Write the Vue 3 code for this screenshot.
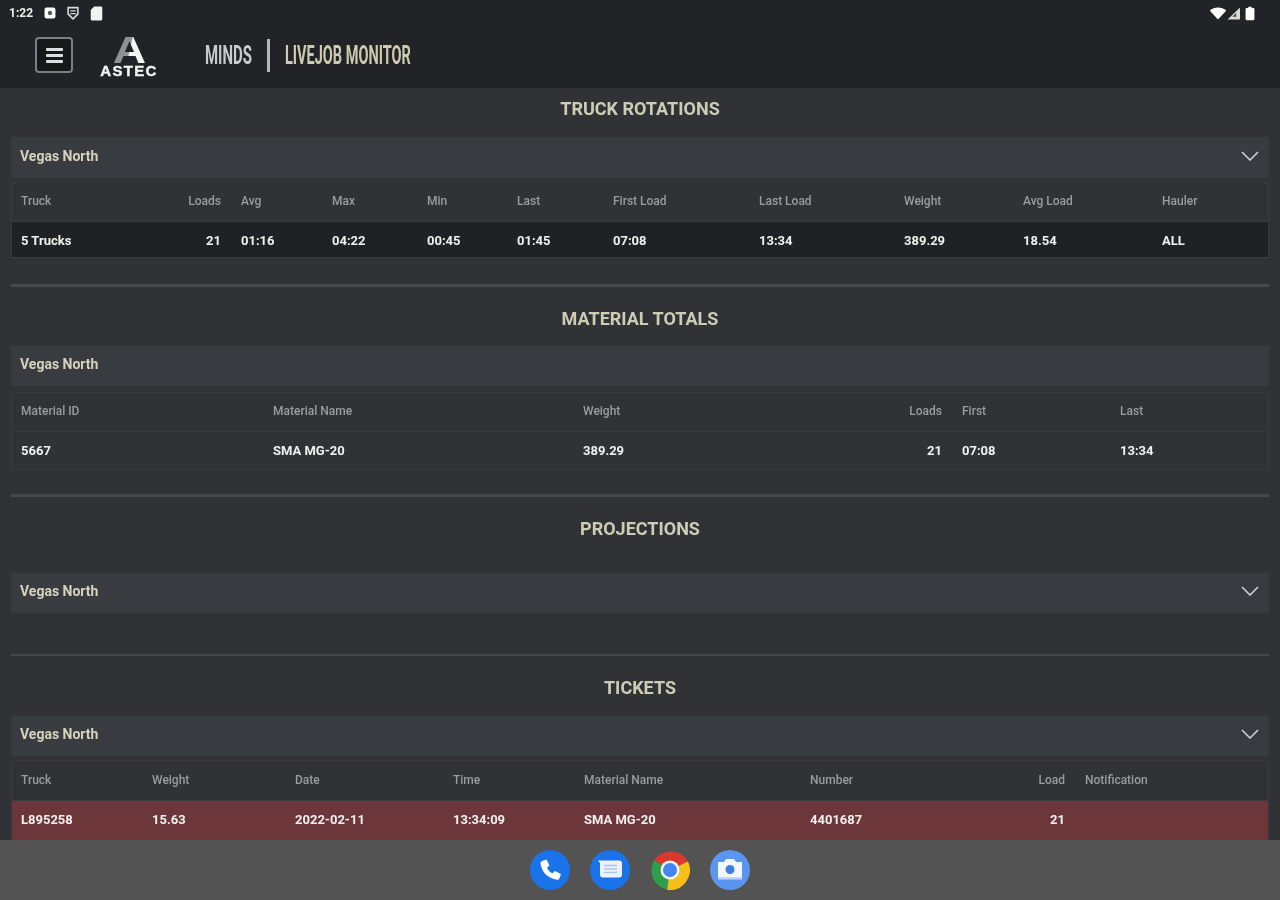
<script setup>
const truckCols = [
  { label: 'Truck', value: '5 Trucks', w: 160 },
  { label: 'Loads', value: '21', w: 60, end: true },
  { label: 'Avg', value: '01:16', w: 91 },
  { label: 'Max', value: '04:22', w: 95 },
  { label: 'Min', value: '00:45', w: 90 },
  { label: 'Last', value: '01:45', w: 96 },
  { label: 'First Load', value: '07:08', w: 146 },
  { label: 'Last Load', value: '13:34', w: 145 },
  { label: 'Weight', value: '389.29', w: 119 },
  { label: 'Avg Load', value: '18.54', w: 139 },
  { label: 'Hauler', value: 'ALL', w: 117 },
]
const materialCols = [
  { label: 'Material ID', value: '5667', w: 252 },
  { label: 'Material Name', value: 'SMA MG-20', w: 310 },
  { label: 'Weight', value: '389.29', w: 307 },
  { label: 'Loads', value: '21', w: 72, end: true },
  { label: 'First', value: '07:08', w: 158 },
  { label: 'Last', value: '13:34', w: 159 },
]
const ticketCols = [
  { label: 'Truck', value: 'L895258', w: 131 },
  { label: 'Weight', value: '15.63', w: 143 },
  { label: 'Date', value: '2022-02-11', w: 158 },
  { label: 'Time', value: '13:34:09', w: 131 },
  { label: 'Material Name', value: 'SMA MG-20', w: 226 },
  { label: 'Number', value: '4401687', w: 200 },
  { label: 'Load', value: '21', w: 75, end: true },
  { label: 'Notification', value: '', w: 195 },
]
const tmpl = (cols) => ({ gridTemplateColumns: cols.map((c) => c.w + 'px').join(' ') })
</script>

<template>
  <div class="page">
    <header class="top">
      <div class="status">
        <div class="status-left">
          <span class="time">1:22</span>
          <svg width="12" height="12" viewBox="0 0 11 11"><rect x="0.5" y="0.5" width="10" height="10" rx="2" fill="#fff"/><circle cx="5.500" cy="5.500" r="2" fill="#55585c"/></svg>
          <svg width="12" height="14" viewBox="0 0 11 13"><path d="M1 1.500h9v6L5.500 12 1 7.500z" fill="none" stroke="#d8d8d8" stroke-width="1.500"/><path d="M3 4.500h5M3 7h5" stroke="#d8d8d8" stroke-width="1.200"/></svg>
          <svg width="13" height="15" viewBox="0 0 11 13"><path d="M3.500 0.500H9.500a1 1 0 0 1 1 1v10a1 1 0 0 1-1 1h-8a1 1 0 0 1-1-1V3.500z" fill="#f2f2f2"/></svg>
        </div>
        <div class="status-right">
          <svg width="18" height="13" viewBox="0 0 16 12"><path d="M0.500 3.500C4.500-0.500 11.500-0.500 15.500 3.500L8 11.500z" fill="#fff"/></svg>
          <svg width="13" height="13" viewBox="0 0 12 12"><path d="M12 0.500V11.500H0.500z" fill="#d8d8d8"/><path d="M8.500 5.500V9H5z" fill="#45474a"/></svg>
          <svg class="batt" width="10" height="15" viewBox="0 0 9 13"><path d="M3 0.500h3v1h1.500a1 1 0 0 1 1 1v9a1 1 0 0 1-1 1h-6a1 1 0 0 1-1-1v-9a1 1 0 0 1 1-1H3z" fill="#fff"/></svg>
        </div>
      </div>
      <div class="appbar">
        <button class="menu" type="button" aria-label="Menu"><span></span><span></span><span></span></button>
        <div class="logo">
          <span class="logo-a">A</span>
          <span class="logo-name">ASTEC</span>
        </div>
        <span class="brand minds">MINDS</span>
        <span class="brand-sep"></span>
        <span class="brand accent">LIVEJOB MONITOR</span>
      </div>
    </header>

    <main class="content">
      <section class="s1">
        <h2>TRUCK ROTATIONS</h2>
        <div class="bar">
          <span>Vegas North</span>
          <svg class="chev" width="18" height="10" viewBox="0 0 18 10"><path d="M1 1l8 8 8-8" fill="none" stroke="#d4d6d8" stroke-width="1.500"/></svg>
        </div>
        <div class="table">
          <div class="row head" :style="tmpl(truckCols)">
            <span v-for="c in truckCols" :key="c.label" :class="{ end: c.end }">{{ c.label }}</span>
          </div>
          <div class="row body dark" :style="tmpl(truckCols)">
            <span v-for="c in truckCols" :key="c.label" :class="{ end: c.end }">{{ c.value }}</span>
          </div>
        </div>
        <hr class="rule" />
      </section>

      <section class="s2">
        <h2>MATERIAL TOTALS</h2>
        <div class="bar"><span>Vegas North</span></div>
        <div class="table">
          <div class="row head" :style="tmpl(materialCols)">
            <span v-for="c in materialCols" :key="c.label" :class="{ end: c.end }">{{ c.label }}</span>
          </div>
          <div class="row body" :style="tmpl(materialCols)">
            <span v-for="c in materialCols" :key="c.label" :class="{ end: c.end }">{{ c.value }}</span>
          </div>
        </div>
        <hr class="rule" />
      </section>

      <section class="s3">
        <h2>PROJECTIONS</h2>
        <div class="bar">
          <span>Vegas North</span>
          <svg class="chev" width="18" height="10" viewBox="0 0 18 10"><path d="M1 1l8 8 8-8" fill="none" stroke="#d4d6d8" stroke-width="1.500"/></svg>
        </div>
        <hr class="rule thin" />
      </section>

      <section class="s4">
        <h2>TICKETS</h2>
        <div class="bar">
          <span>Vegas North</span>
          <svg class="chev" width="18" height="10" viewBox="0 0 18 10"><path d="M1 1l8 8 8-8" fill="none" stroke="#d4d6d8" stroke-width="1.500"/></svg>
        </div>
        <div class="table">
          <div class="row head" :style="tmpl(ticketCols)">
            <span v-for="c in ticketCols" :key="c.label" :class="{ end: c.end }">{{ c.label }}</span>
          </div>
          <div class="row body red" :style="tmpl(ticketCols)">
            <span v-for="c in ticketCols" :key="c.label" :class="{ end: c.end }">{{ c.value }}</span>
          </div>
        </div>
      </section>
    </main>

    <footer class="dock">
      <svg class="app" viewBox="0 0 40 40"><circle cx="20" cy="20" r="20" fill="#1a73e8"/><path d="M12 11l4.500-1.500 3 6-2.400 2.200c1 2.600 3 4.600 5.500 5.500l2.300-2.300 6 3-1.500 4.500c-.4 1-1.400 1.500-2.400 1.300C17.500 28 12 22.500 10.500 14c-.2-1 .5-2.500 1.500-3z" fill="#fff"/></svg>
      <svg class="app" viewBox="0 0 40 40"><circle cx="20" cy="20" r="20" fill="#1a73e8"/><path d="M8 10.500h21a3 3 0 0 1 3 3v11a3 3 0 0 1-3 3H13a3 3 0 0 1-3-3V13z" fill="#eef3fb"/><path d="M14 15.500h13M14 19h13M14 22.500h13" stroke="#a9c6f2" stroke-width="1.500"/></svg>
      <svg class="app" viewBox="0 0 40 40"><path d="M20 20L4 10.500A20 20 0 0 1 38 11.500z" fill="#d9392f"/><path d="M20 20L4 10.500A20 20 0 0 0 17 39.800z" fill="#2f9e4a"/><path d="M20 20L38 11.500A20 20 0 0 1 17 39.800z" fill="#f6c01a"/><circle cx="20" cy="20" r="9.500" fill="#f1f3f4"/><circle cx="20" cy="20" r="7" fill="#4285f4"/></svg>
      <svg class="app" viewBox="0 0 40 40"><circle cx="20" cy="20" r="20" fill="#5a95ee"/><path d="M8 12h6l2-3h8l2 3h6v15H8z" fill="#f2f5fb"/><path d="M8 27h24v2.500H8z" fill="#c3d6f4"/><circle cx="20" cy="19.500" r="4.500" fill="#3f7fe0"/></svg>
    </footer>
  </div>
</template>

<style>
html, body { margin: 0; background: #303236; }
</style>

<style scoped>
.page {
  width: 1280px;
  height: 900px;
  display: flex;
  flex-direction: column;
  overflow: hidden;
  background: #303236;
  font-family: Roboto, "Liberation Sans", sans-serif;
  color: #fff;
  filter: blur(0.45px);
}
.top {
  height: 88px;
  flex: none;
  background: #212326;
  display: flex;
  flex-direction: column;
}
.status {
  height: 26px;
  padding: 0 25px 0 9px;
  display: flex;
  align-items: center;
  justify-content: space-between;
}
.status-left, .status-right { display: flex; align-items: center; }
.status-left { gap: 11px; }
.time { font-size: 12px; font-weight: 700; color: #eee; width: 26px; margin-right: -2px; }
.batt { margin-left: 5px; }
.appbar {
  flex: 1;
  display: flex;
  align-items: center;
  padding-left: 35px;
  padding-bottom: 4px;
}
.menu {
  width: 38px;
  height: 36px;
  box-sizing: border-box;
  border: 2px solid #7e7f81;
  border-radius: 4px;
  background: #17181a;
  padding: 0;
  display: flex;
  flex-direction: column;
  align-items: center;
  justify-content: center;
  gap: 3px;
}
.menu span { width: 17px; height: 3px; background: #dedede; border-radius: 1px; }
.logo {
  width: 60px;
  margin: 4px 46px 0 26px;
  display: flex;
  flex-direction: column;
  align-items: center;
  font-family: "Liberation Sans", sans-serif;
  font-weight: 700;
}
.logo-a {
  font-size: 37px;
  line-height: 28px;
  height: 28px;
  transform: scaleX(1.25);
  background: linear-gradient(100deg, #8f9194 0 48%, #f4f4f4 52%);
  -webkit-background-clip: text;
  background-clip: text;
  color: transparent;
}
.logo-name { font-size: 15px; line-height: 12px; letter-spacing: 1.300px; color: #f4f4f4; -webkit-text-stroke: 0.4px #f4f4f4; }
.brand {
  display: block;
  width: 126px;
  white-space: nowrap;
  font-weight: 700;
  font-size: 26px;
  line-height: 30px;
  transform-origin: left center;
  transform: scaleX(0.558);
}
.brand.minds { width: 47px; color: #c9cacc; transform: scaleX(0.575); }
.brand.accent { color: #cfcbb0; }
.brand-sep { width: 3px; height: 33px; margin: 0 15px; background: #b5b6b8; }
.content { flex: 1; min-height: 0; overflow: hidden; }
section { padding: 0 11px; }
h2 {
  margin: 0;
  height: 42px;
  line-height: 42px;
  text-align: center;
  font-size: 18px;
  font-weight: 700;
  color: #cfccb6;
}
.bar {
  height: 40px;
  box-sizing: border-box;
  background: #383c41;
  display: flex;
  align-items: center;
  justify-content: space-between;
  padding: 0 10px 4px 9px;
  font-size: 14px;
  font-weight: 700;
  color: #d6d2bc;
}
.table { border: 1px solid #383b3f; }
.row { display: grid; align-items: center; box-sizing: border-box; }
.row span { padding: 0 11px 0 9px; white-space: nowrap; }
.row .end { text-align: right; }
.head { height: 39px; padding-bottom: 2px; font-size: 12px; font-weight: 500; color: #9a9c9e; border-bottom: 1px solid #383b3f; }
.body { height: 37px; padding-bottom: 1px; font-size: 13px; font-weight: 700; color: #f0f0f0; }
.dark { background: #1f2124; height: 35px; padding-bottom: 0; padding-top: 1px; }
.red { background: #6d363b; height: 40px; padding-bottom: 4px; }
.rule { margin: 0; border: 0; height: 3px; background: #45484c; }
.rule.thin { height: 2px; }
.s1 .bar { height: 41px; margin-top: 7px; }
.s1 .table { margin-top: 4px; }
.s1 .rule { margin-top: 26px; }
.s2 h2 { margin-top: 11px; }
.s2 .bar { margin-top: 6px; }
.s2 .table { margin-top: 6px; }
.s2 .rule { margin-top: 24px; }
.s3 h2 { margin-top: 11px; }
.s3 .bar { margin-top: 23px; }
.s3 .rule { margin-top: 41px; }
.s4 h2 { margin-top: 11px; }
.s4 .bar { margin-top: 7px; }
.s4 .table { margin-top: 4px; }
.s4 .head { height: 40px; }
.dock {
  height: 60px;
  flex: none;
  background: #535353;
  display: flex;
  align-items: center;
  justify-content: center;
  gap: 20px;
}
.app { width: 40px; height: 40px; display: block; }
</style>
